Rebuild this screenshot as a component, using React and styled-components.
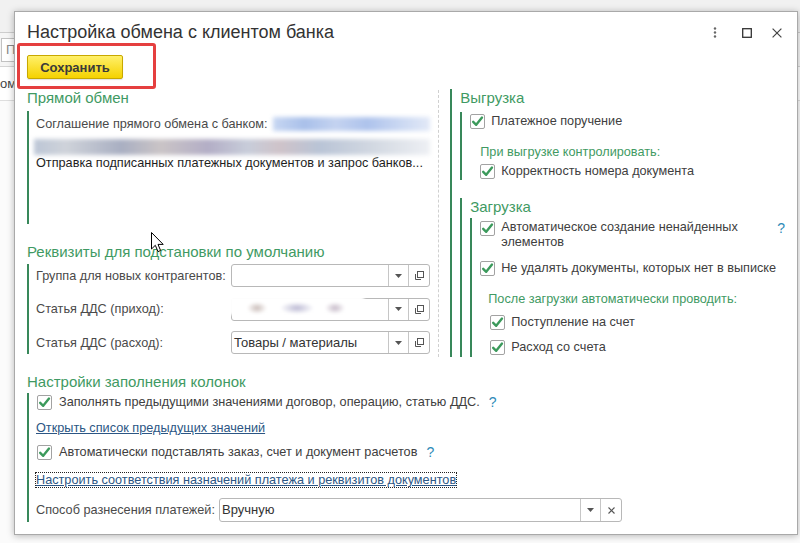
import React from 'react';
import styled, { createGlobalStyle } from 'styled-components';

const Global = createGlobalStyle`
  html, body { margin: 0; padding: 0; }
  body {
    width: 800px; height: 543px; overflow: hidden;
    font-family: "Liberation Sans", Arial, sans-serif;
    background: #f7f7f7;
  }
  * { box-sizing: border-box; }
`;

const GREEN_TEXT = '#3f9a63';
const GREEN_BAR = '#38885a';
const FS = '12.7px';

const Screen = styled.div`
  position: relative;
  width: 800px;
  height: 543px;
  overflow: hidden;
  background: #fbfbfb;
`;

/* ---------- background application fragment ---------- */
const BackTop = styled.div`
  height: 33px;
  background: #f1f1f1;
  border-bottom: 1px solid #cdcdcd;
`;
const BackToolbar = styled.div`
  height: 34px;
  display: flex;
  align-items: center;
  padding-left: 1px;
  background: #f5f5f5;
  border-bottom: 1px solid #d4d4d4;
`;
const BackField = styled.div`
  width: 22px;
  height: 24px;
  border: 1px solid #c2c2c2;
  background: #fff;
  color: #8a8a8a;
  font-size: 13px;
  line-height: 22px;
  padding-left: 4px;
`;
const BackRow = styled.div`
  height: 34px;
  display: flex;
  align-items: center;
  font-size: 13px;
  color: #444;
  background: #fff;
  border-bottom: 1px solid #dedede;
`;

/* ---------- dialog ---------- */
const Dialog = styled.div`
  position: absolute;
  left: 14px;
  top: 11px;
  width: 784px;
  height: 524px;
  background: #fff;
  border: 1px solid #a9a9a9;
  box-shadow: 0 1px 7px rgba(0, 0, 0, 0.28);
  padding: 10px 12px 0 12px;
  display: flex;
  flex-direction: column;
`;

const Header = styled.div`
  display: flex;
  align-items: center;
  height: 21px;
`;
const Title = styled.div`
  font-size: 18px;
  line-height: 21px;
  color: #333;
`;
const Controls = styled.div`
  margin-left: auto;
  display: flex;
  align-items: center;
  margin-right: 3px;
`;
const CtrlIcon = styled.span`
  display: inline-flex;
  margin-left: ${(p) => p.$gap}px;
`;

const Toolbar = styled.div`
  margin-top: 12px;
  display: flex;
`;
const SaveButton = styled.button`
  width: 96px;
  height: 24px;
  padding: 0;
  border: 1px solid #c8a800;
  border-radius: 2px;
  background: linear-gradient(#fff06a, #f5d200);
  box-shadow: 0 1px 1px rgba(0, 0, 0, 0.12);
  font: bold 13px "Liberation Sans", Arial, sans-serif;
  color: #3a3a3a;
`;
const Highlight = styled.div`
  position: absolute;
  left: 2px;
  top: 31px;
  width: 139px;
  height: 46px;
  border: 3px solid #e53f3f;
  border-radius: 3px;
  pointer-events: none;
`;

const Columns = styled.div`
  margin-top: 10px;
  height: 268px;
  display: flex;
`;
const LeftCol = styled.div`
  width: 404px;
  display: flex;
  flex-direction: column;
`;
const Divider = styled.div`
  margin-left: 8px;
  margin-top: 1px;
  width: 0;
  border-left: 1px dashed #d0d0d0;
`;
const RightCol = styled.div`
  margin-left: 11px;
  flex: 1;
  border-left: 2px solid ${GREEN_BAR};
  padding-left: 8px;
  display: flex;
  flex-direction: column;
`;

const GroupTitle = styled.div`
  font-size: 15px;
  line-height: 18px;
  color: ${GREEN_TEXT};
  margin-top: ${(p) => p.$mt || 0}px;
  margin-bottom: ${(p) => p.$mb || 0}px;
`;
const GroupBody = styled.div`
  border-left: 2px solid ${GREEN_BAR};
  padding-left: ${(p) => p.$pl || 7}px;
  padding-top: ${(p) => p.$pt || 0}px;
  height: ${(p) => (p.$h ? `${p.$h}px` : 'auto')};
  flex: ${(p) => (p.$grow ? 1 : 'none')};
  display: flex;
  flex-direction: column;
  gap: ${(p) => p.$gap || 0}px;
`;
const SubGroup = styled.div`
  margin-top: ${(p) => p.$mt || 0}px;
  border-left: 2px solid ${GREEN_BAR};
  padding-left: 8px;
  flex: 1;
  display: flex;
  flex-direction: column;
`;

const Label = styled.span`
  font-size: ${FS};
  line-height: 16px;
  color: #4a4a4a;
  white-space: nowrap;
  width: ${(p) => (p.$w ? `${p.$w}px` : 'auto')};
  flex: none;
`;
const AgreementRow = styled.div`
  height: 23px;
  display: flex;
  align-items: center;
  gap: 5px;
`;
const BlurLine = styled.div`
  flex: ${(p) => (p.$fill ? 1 : 'none')};
  height: ${(p) => p.$h}px;
  margin-top: ${(p) => p.$mt || 0}px;
  margin-left: ${(p) => p.$ml || 0}px;
  background: ${(p) => p.$bg};
  filter: blur(2px);
`;
const Description = styled.div`
  font-size: ${FS};
  line-height: 16px;
  color: #1e1e1e;
  white-space: nowrap;
`;

const FieldRow = styled.div`
  display: flex;
  align-items: center;
  height: ${(p) => p.$h || 23}px;
  margin-top: ${(p) => p.$mt || 0}px;
`;
const InputBox = styled.div`
  position: relative;
  width: ${(p) => p.$w}px;
  height: 100%;
  border: 1px solid #b8b8b8;
  border-radius: 3px;
  display: flex;
  background: #fff;
`;
const InputText = styled.div`
  flex: 1;
  font-size: 13px;
  line-height: ${(p) => p.$lh || 21}px;
  color: #333;
  padding-left: 2px;
  white-space: nowrap;
  overflow: hidden;
`;
const InputBtn = styled.div`
  width: ${(p) => p.$w || 20}px;
  border-left: 1px solid #c6c6c6;
  display: flex;
  align-items: center;
  justify-content: center;
`;
const BlurCover = styled.div`
  position: absolute;
  left: -3px;
  top: -3px;
  width: 135px;
  height: 19px;
  background: radial-gradient(ellipse 10px 6px at 28px 12px, #c9bcb8, transparent),
    radial-gradient(ellipse 17px 6px at 68px 12px, #bbb9d3, transparent),
    radial-gradient(ellipse 10px 6px at 106px 12px, #c6bac8, transparent), #fff;
  filter: blur(1.5px);
`;

const CheckRow = styled.div`
  display: flex;
  align-items: ${(p) => (p.$top ? 'flex-start' : 'center')};
  gap: ${(p) => p.$gap || 6}px;
  min-height: 18px;
  margin-top: ${(p) => p.$mt || 0}px;
  margin-left: ${(p) => p.$ml || 0}px;
`;
const Box = styled.span`
  width: 15px;
  height: 15px;
  flex: none;
  border: 1px solid #a2a2a2;
  border-radius: 2px;
  background: #fff;
  display: inline-flex;
  align-items: center;
  justify-content: center;
  margin-top: ${(p) => p.$mt || 0}px;
`;
const CheckText = styled.span`
  font-size: ${FS};
  line-height: ${(p) => p.$lh || 16}px;
  color: #404040;
  white-space: ${(p) => (p.$wrap ? 'normal' : 'nowrap')};
  width: ${(p) => (p.$w ? `${p.$w}px` : 'auto')};
`;
const Help = styled.span`
  font-size: 14px;
  line-height: 16px;
  color: #2e8bb8;
  margin-left: ${(p) => p.$ml || 0}px;
`;
const SubTitle = styled.div`
  font-size: ${FS};
  line-height: 16px;
  color: ${GREEN_TEXT};
  margin-top: ${(p) => p.$mt || 0}px;
  margin-left: ${(p) => p.$ml || 0}px;
  white-space: nowrap;
`;

const BottomSection = styled.div`
  display: flex;
  flex-direction: column;
`;
const Link = styled.a`
  align-self: flex-start;
  font-size: ${FS};
  line-height: ${(p) => (p.$focused ? 14 : 16)}px;
  color: #2c5684;
  text-decoration: underline;
  margin-top: ${(p) => p.$mt || 0}px;
  border: 1px ${(p) => (p.$focused ? 'dotted #222' : 'none')};
  margin-left: ${(p) => (p.$focused ? -1 : 0)}px;
  white-space: nowrap;
  cursor: pointer;
`;

const CursorLayer = styled.svg`
  position: absolute;
  left: 151px;
  top: 232px;
`;

const Check = ({ mt }) => (
  <Box $mt={mt}>
    <svg width="13" height="13" viewBox="0 0 13 13">
      <path
        d="M2.2 6.8 L5.2 9.8 L11 2.6"
        fill="none"
        stroke="#3c9a5c"
        strokeWidth="2.4"
        strokeLinecap="round"
        strokeLinejoin="round"
      />
    </svg>
  </Box>
);

const DropArrow = () => (
  <svg width="7" height="4" viewBox="0 0 7 4">
    <path d="M0 0 H7 L3.5 4 Z" fill="#555" />
  </svg>
);
const OpenIcon = () => (
  <svg width="11" height="11" viewBox="0 0 11 11">
    <rect x="3.5" y="1.5" width="6" height="6" fill="none" stroke="#555" strokeWidth="1" />
    <path d="M1.5 4 V9.5 H7" fill="none" stroke="#555" strokeWidth="1" />
  </svg>
);
const ClearIcon = () => (
  <svg width="7" height="7" viewBox="0 0 7 7">
    <path d="M0.5 0.5 L6.5 6.5 M6.5 0.5 L0.5 6.5" stroke="#555" strokeWidth="1.1" />
  </svg>
);

const SelectField = ({ width, value, blurred }) => (
  <InputBox $w={width}>
    <InputText>{value}</InputText>
    <InputBtn>
      <DropArrow />
    </InputBtn>
    <InputBtn $w={21}>
      <OpenIcon />
    </InputBtn>
    {blurred && <BlurCover />}
  </InputBox>
);

export default function App() {
  return (
    <Screen>
      <Global />
      <BackTop />
      <BackToolbar>
        <BackField>П</BackField>
      </BackToolbar>
      <BackRow>ом</BackRow>

      <Dialog>
        <Header>
          <Title>Настройка обмена с клиентом банка</Title>
          <Controls>
            <CtrlIcon $gap={0}>
              <svg width="4" height="11" viewBox="0 0 4 11">
                <circle cx="2" cy="1.5" r="1.2" fill="#666" />
                <circle cx="2" cy="5.5" r="1.2" fill="#666" />
                <circle cx="2" cy="9.5" r="1.2" fill="#666" />
              </svg>
            </CtrlIcon>
            <CtrlIcon $gap={25}>
              <svg width="10" height="10" viewBox="0 0 10 10">
                <rect x="0.7" y="0.7" width="8.6" height="8.6" fill="none" stroke="#333" strokeWidth="1.3" />
              </svg>
            </CtrlIcon>
            <CtrlIcon $gap={20}>
              <svg width="10" height="10" viewBox="0 0 10 10">
                <path d="M0.6 0.6 L9.4 9.4 M9.4 0.6 L0.6 9.4" stroke="#444" strokeWidth="1.2" />
              </svg>
            </CtrlIcon>
          </Controls>
        </Header>

        <Toolbar>
          <SaveButton>Сохранить</SaveButton>
        </Toolbar>
        <Highlight />

        <Columns>
          <LeftCol>
            <GroupTitle $mb={4}>Прямой обмен</GroupTitle>
            <GroupBody $h={113} $pt={1}>
              <AgreementRow>
                <Label>Соглашение прямого обмена с банком:</Label>
                <BlurLine
                  $fill
                  $h={14}
                  $bg="linear-gradient(90deg, #c8d7f2, #a9c0ea 20%, #c4d3f0 40%, #aec3ec 60%, #c9d7f2 80%, #e2e9f7)"
                />
              </AgreementRow>
              <BlurLine
                $h={16}
                $mt={4}
                $ml={-2}
                $bg="linear-gradient(90deg, #bcc6d6, #cfd3da 8%, #a9afc2 22%, #cac4c6 32%, #b3aec6 44%, #c8cdda 54%, #cfc3c9 62%, #b9c4d6 72%, #d3d9e2 86%, #eef0f4)"
              />
              <Description>Отправка подписанных платежных документов и запрос банков...</Description>
            </GroupBody>

            <GroupTitle $mt={19} $mb={3}>
              Реквизиты для подстановки по умолчанию
            </GroupTitle>
            <GroupBody $gap={10.5} $pt={0}>
              <FieldRow>
                <Label $w={195}>Группа для новых контрагентов:</Label>
                <SelectField width={199} value="" />
              </FieldRow>
              <FieldRow>
                <Label $w={195}>Статья ДДС (приход):</Label>
                <SelectField width={199} value="" blurred />
              </FieldRow>
              <FieldRow>
                <Label $w={195}>Статья ДДС (расход):</Label>
                <SelectField width={199} value="Товары / материалы" />
              </FieldRow>
            </GroupBody>
          </LeftCol>

          <Divider />

          <RightCol>
            <GroupTitle $mb={5}>Выгрузка</GroupTitle>
            <GroupBody $pl={8} $h={68}>
              <CheckRow>
                <Check />
                <CheckText>Платежное поручение</CheckText>
              </CheckRow>
              <SubTitle $mt={14} $ml={10}>
                При выгрузке контролировать:
              </SubTitle>
              <CheckRow $ml={10} $mt={2}>
                <Check />
                <CheckText>Корректность номера документа</CheckText>
              </CheckRow>
            </GroupBody>

            <SubGroup $mt={18}>
              <GroupTitle $mb={2}>Загрузка</GroupTitle>
              <GroupBody $pl={8} $grow>
                <CheckRow $top $mt={2}>
                  <Check mt={1} />
                  <CheckText $wrap $lh={15} $w={262}>
                    Автоматическое создание ненайденных элементов
                  </CheckText>
                  <Help $ml={8}>?</Help>
                </CheckRow>
                <CheckRow $mt={9}>
                  <Check />
                  <CheckText>Не удалять документы, которых нет в выписке</CheckText>
                </CheckRow>
                <SubTitle $mt={14} $ml={8}>
                  После загрузки автоматически проводить:
                </SubTitle>
                <CheckRow $ml={10} $mt={6}>
                  <Check />
                  <CheckText>Поступление на счет</CheckText>
                </CheckRow>
                <CheckRow $ml={10} $mt={7}>
                  <Check />
                  <CheckText>Расход со счета</CheckText>
                </CheckRow>
              </GroupBody>
            </SubGroup>
          </RightCol>
        </Columns>

        <BottomSection>
          <GroupTitle $mt={16} $mb={2}>
            Настройки заполнения колонок
          </GroupTitle>
          <GroupBody $h={129}>
            <CheckRow $ml={1} $gap={7}>
              <Check />
              <CheckText>Заполнять предыдущими значениями договор, операцию, статью ДДС.</CheckText>
              <Help $ml={2}>?</Help>
            </CheckRow>
            <Link $mt={9}>Открыть список предыдущих значений</Link>
            <CheckRow $ml={1} $gap={7} $mt={7}>
              <Check />
              <CheckText>Автоматически подставлять заказ, счет и документ расчетов</CheckText>
              <Help $ml={2}>?</Help>
            </CheckRow>
            <Link $focused $mt={11}>
              Настроить соответствия назначений платежа и реквизитов документов
            </Link>
            <FieldRow $h={24} $mt={10}>
              <Label $w={183}>Способ разнесения платежей:</Label>
              <InputBox $w={403}>
                <InputText $lh={22}>Вручную</InputText>
                <InputBtn>
                  <DropArrow />
                </InputBtn>
                <InputBtn $w={21}>
                  <ClearIcon />
                </InputBtn>
              </InputBox>
            </FieldRow>
          </GroupBody>
        </BottomSection>
      </Dialog>

      <CursorLayer width="14" height="22" viewBox="0 0 14 22">
        <path
          d="M0.5 0.5 L0.5 17 L4.3 13.3 L7 19.6 L9.6 18.5 L7 12.4 L12.2 12.4 Z"
          fill="#fff"
          stroke="#000"
          strokeWidth="1"
          strokeLinejoin="round"
        />
      </CursorLayer>
    </Screen>
  );
}
